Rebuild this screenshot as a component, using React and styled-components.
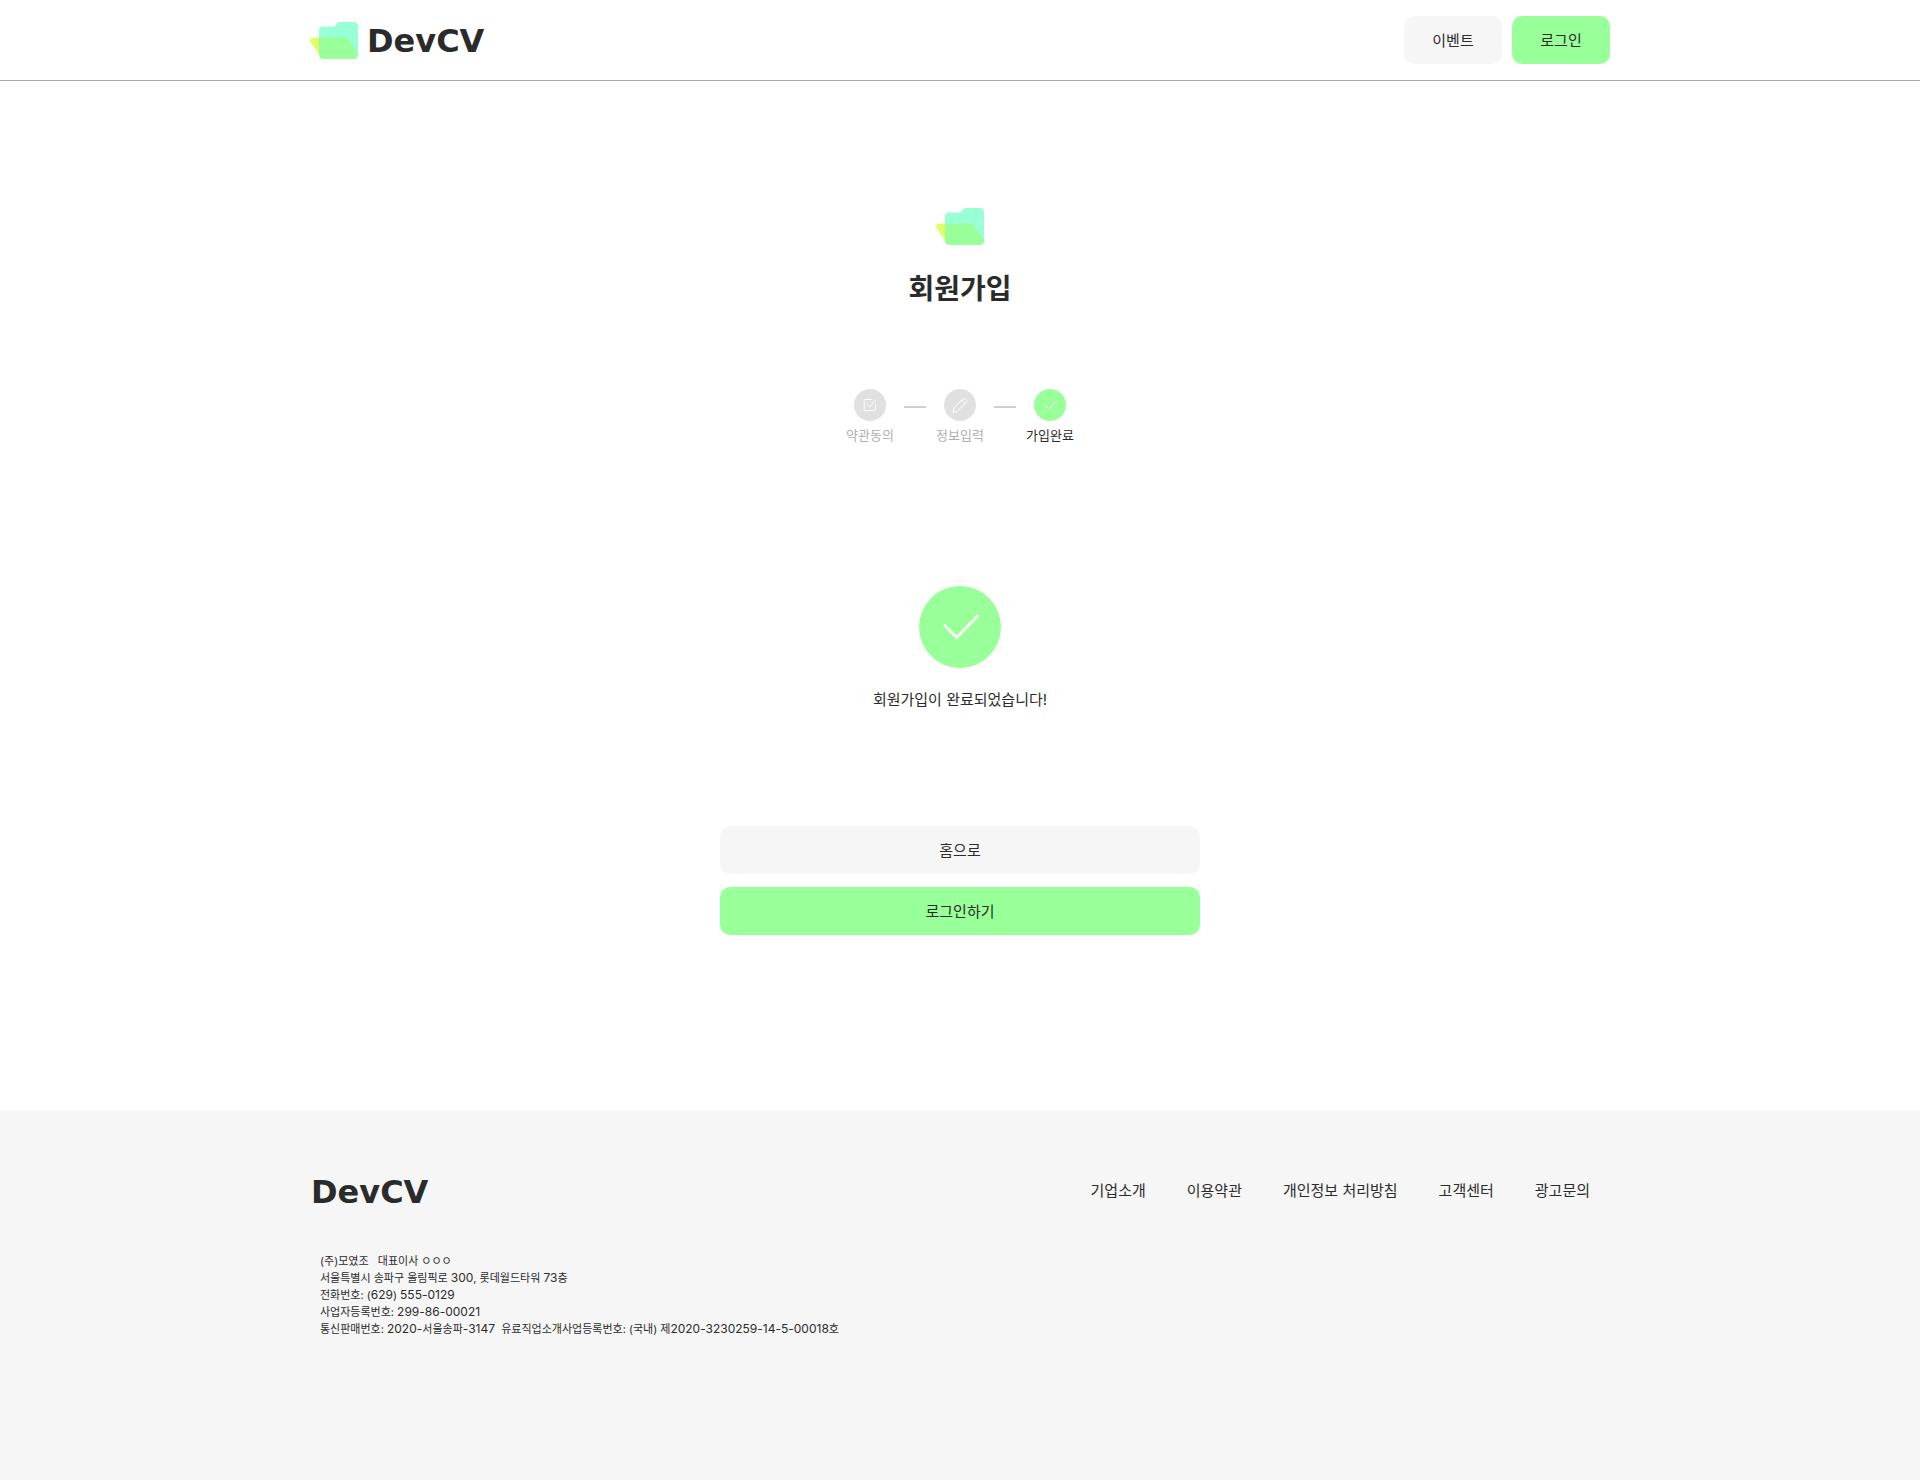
import React from "react";
import styled, { createGlobalStyle } from "styled-components";

const GlobalStyle = createGlobalStyle`
  * { box-sizing: border-box; }
  body {
    margin: 0;
    background: #ffffff;
    color: #2b2b2b;
    font-family: Inter, "Noto Sans CJK KR", sans-serif;
    font-size: 15px;
    line-height: 24px;
  }
  a { color: inherit; text-decoration: none; }
`;

const Page = styled.div`
  min-height: 100vh;
  display: flex;
  flex-direction: column;
`;

const Container = styled.div`
  width: 100%;
  max-width: 1300px;
  margin: 0 auto;
`;

const Header = styled.header`
  border-bottom: 1px solid #aaaaaa;
`;

const HeaderRow = styled(Container)`
  height: 80px;
  display: flex;
  align-items: center;
  justify-content: space-between;
`;

const HeaderNav = styled.nav`
  display: flex;
  gap: 10px;
`;

const Button = styled.button`
  width: ${(p) => (p.$wide ? "100%" : "98px")};
  height: 48px;
  padding: 0;
  border: 0;
  border-radius: 10px;
  background: ${(p) => (p.$primary ? "#99ff99" : "#f6f6f6")};
  color: inherit;
  font: 15px/24px "Noto Sans CJK KR", sans-serif;
  cursor: pointer;
`;

const Brand = styled.a`
  display: flex;
  align-items: center;
  gap: 8px;
`;

const Wordmark = styled.span`
  padding: 2px 0 0 1px;
  font-family: "DejaVu Sans", sans-serif;
  font-size: 32px;
  line-height: 40px;
  font-weight: 700;
`;

const Main = styled.main`
  flex: 1;
  width: 100%;
  max-width: 480px;
  margin: 0 auto;
  padding: 127px 0 175px;
  display: flex;
  flex-direction: column;
  align-items: center;
`;

const Title = styled.h1`
  margin: 20px 0 80px;
  font-family: "Noto Sans CJK KR", sans-serif;
  font-size: 28px;
  line-height: 44px;
  font-weight: 700;
`;

const Steps = styled.ol`
  display: flex;
  gap: 10px;
  margin: 0 0 141px;
  padding: 0;
  list-style: none;
`;

const Step = styled.li`
  display: flex;
  gap: 10px;
  color: ${(p) => (p.$active ? "#2b2b2b" : "#b0b0b0")};
`;

const StepBody = styled.div`
  width: 48px;
  display: flex;
  flex-direction: column;
  align-items: center;
  gap: 4px;
  font-size: 13px;
  line-height: 20px;
  white-space: nowrap;
`;

const Disc = styled.span`
  width: ${(p) => p.$size}px;
  height: ${(p) => p.$size}px;
  border-radius: 50%;
  display: flex;
  align-items: center;
  justify-content: center;
  background: ${(p) => (p.$active ? "#99ff99" : "#e0e0e0")};
`;

const Dash = styled.span`
  width: 22px;
  height: 2px;
  margin-top: 17px;
  background: #d0d0d0;
`;

const Message = styled.p`
  margin: 20px 0 114px;
`;

const Actions = styled.div`
  width: 100%;
  display: flex;
  flex-direction: column;
  gap: 13px;
`;

const Footer = styled.footer`
  min-height: 370px;
  padding: 60px 0;
  background: #f6f6f6;
`;

const FooterRow = styled(Container)`
  display: flex;
  align-items: center;
  justify-content: space-between;
  padding-right: 20px;
`;

const FooterNav = styled.nav`
  display: flex;
  gap: 41px;
`;

const Company = styled(Container)`
  padding: 41px 10px 0;
  font-size: 11px;
  line-height: 17px;
  font-style: normal;
  white-space: pre-wrap;

  p { margin: 0; }
`;

const Figures = styled.span`
  font-size: 12px;
  line-height: 16px;
`;

function FolderIcon() {
  return (
    <svg width="48" height="37" viewBox="0 0 48 37" aria-hidden="true">
      <path d="M3.5 15.5H34.5C36 15.5 37 16.2 37.8 17.4L47.5 31.5C48.5 33.5 46.5 36.8 43.5 36.8H14.5C13 36.8 11.8 36.2 11 35L.8 20.6C-.9 18.2.8 15.5 3.5 15.5Z" fill="#e0ff66" />
      <path d="M13 4.5H23.5C25 4.5 25.6 4 26.2 2.8C27 1 28 0 30 0H44C46.5 0 48 1.7 48 4V32.5C48 35 46.3 36.8 44 36.8H13C10.5 36.8 9 35 9 32.5V8.5C9 6.2 10.5 4.5 13 4.5Z" fill="#99ffd6" />
      <path d="M9 15.5H34.5C36 15.5 37 16.2 37.8 17.4L48 31.5V32.5C48 35 46.3 36.8 44 36.8H13C10.5 36.8 9 35 9 32.5Z" fill="#99ff99" />
    </svg>
  );
}

function LineIcon({ size, children }) {
  return (
    <svg width={size} height={size} viewBox="0 0 16 16" fill="none" stroke="#ffffff"
      strokeWidth="1" strokeLinecap="round" strokeLinejoin="miter" aria-hidden="true">
      {children}
    </svg>
  );
}

const agreeIcon = (
  <>
    <path d="M10 2.5H3.2Q2.2 2.5 2.2 3.5V12.7Q2.2 13.7 3.2 13.7H12.6Q13.6 13.7 13.6 12.7V8" />
    <path d="M5.5 7.5L8 10L13.5 3" />
  </>
);
const pencilIcon = (
  <>
    <path d="M1 15L1.8 11.2L11.2 1.6Q12 .9 12.8 1.6L14.6 3.4Q15.3 4.2 14.6 5L5.2 14.3Z" />
    <path d="M9.6 3.2L13 6.6" />
  </>
);
const checkIcon = <path d="M2.5 7.5L6.8 11.8L14.3 4.1" />;

const steps = [
  { label: "약관동의", icon: agreeIcon },
  { label: "정보입력", icon: pencilIcon },
  { label: "가입완료", icon: checkIcon, active: true },
];

const footerLinks = ["기업소개", "이용약관", "개인정보 처리방침", "고객센터", "광고문의"];

const companyLines = [
  "(주)모였조   대표이사 ㅇㅇㅇ",
  "서울특별시 송파구 올림픽로 300, 롯데월드타워 73층",
  "전화번호: (629) 555-0129",
  "사업자등록번호: 299-86-00021",
  "통신판매번호: 2020-서울송파-3147  유료직업소개사업등록번호: (국내) 제2020-3230259-14-5-00018호",
];

// Numbers are set one size above the Hangul so both look equally large.
function CompanyLine({ text }) {
  return (
    <p>
      {text.split(/([\d-]+)/).map((part, i) =>
        i % 2 ? <Figures key={i}>{part}</Figures> : part
      )}
    </p>
  );
}

export default function App() {
  return (
    <Page>
      <GlobalStyle />
      <Header>
        <HeaderRow>
          <Brand href="#">
            <FolderIcon />
            <Wordmark>DevCV</Wordmark>
          </Brand>
          <HeaderNav>
            <Button type="button">이벤트</Button>
            <Button type="button" $primary>로그인</Button>
          </HeaderNav>
        </HeaderRow>
      </Header>
      <Main>
        <FolderIcon />
        <Title>회원가입</Title>
        <Steps>
          {steps.map((step, i) => (
            <Step key={step.label} $active={step.active}>
              <StepBody>
                <Disc $size={32} $active={step.active}>
                  <LineIcon size={16}>{step.icon}</LineIcon>
                </Disc>
                {step.label}
              </StepBody>
              {i < steps.length - 1 && <Dash />}
            </Step>
          ))}
        </Steps>
        <Disc $size={82} $active>
          <LineIcon size={44}>{checkIcon}</LineIcon>
        </Disc>
        <Message>회원가입이 완료되었습니다!</Message>
        <Actions>
          <Button type="button" $wide>홈으로</Button>
          <Button type="button" $wide $primary>로그인하기</Button>
        </Actions>
      </Main>
      <Footer>
        <FooterRow>
          <Brand href="#"><Wordmark>DevCV</Wordmark></Brand>
          <FooterNav>
            {footerLinks.map((label) => <a key={label} href="#">{label}</a>)}
          </FooterNav>
        </FooterRow>
        <Company as="address">
          {companyLines.map((line) => <CompanyLine key={line} text={line} />)}
        </Company>
      </Footer>
    </Page>
  );
}
